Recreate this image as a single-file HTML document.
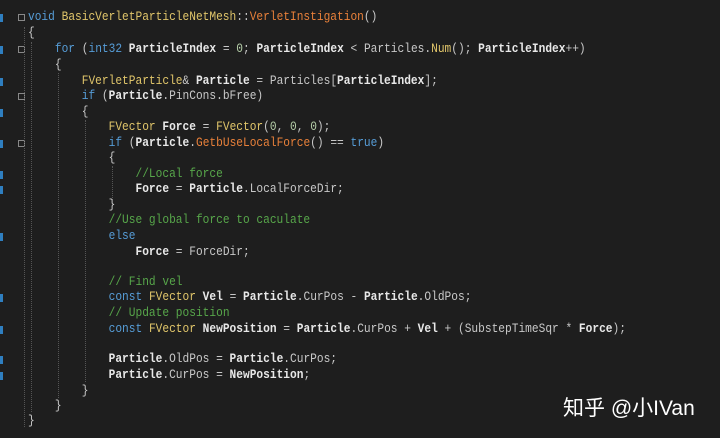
<!DOCTYPE html>
<html><head><meta charset="utf-8"><style>
body{margin:0;width:720px;height:438px;background:#1e1e1e;overflow:hidden;position:relative;font-family:"Liberation Mono",monospace;}
.l{position:absolute;left:28px;white-space:pre;font-size:12.45px;line-height:15.5px;color:#c8c8c8;transform:scaleX(0.9);transform-origin:0 0;}
.k{color:#569cd6}.t{color:#e0c56a}.f{color:#e8803a}.b{font-weight:bold;color:#e8e8e8}.c{color:#57a64a}.n{color:#b5cea8}
.dot{position:absolute;left:0;width:3px;height:8px;background:#2f7fc0;}
.box{position:absolute;left:18px;width:7px;height:7px;border:1px solid #888;box-sizing:border-box;}
.g{position:absolute;border-left:1px dotted #555;}
.wm{position:absolute;left:563px;top:392px;color:#fff;font-family:"Liberation Sans","Noto Sans CJK SC",sans-serif;font-size:21px;}
</style></head><body>
<div class="box" style="top:14px"></div><div class="box" style="top:46px"></div><div class="box" style="top:93px"></div><div class="box" style="top:140px"></div>
<div class="g" style="left:24px;top:27px;height:400px"></div>
<div class="g" style="left:31px;top:42px;height:370px"></div>
<div class="g" style="left:58px;top:73px;height:325px"></div>
<div class="g" style="left:85px;top:120px;height:262px"></div>
<div class="g" style="left:112px;top:166px;height:34px"></div>
<div class="l" style="top:10px"><span class="k">void</span> <span class="t">BasicVerletParticleNetMesh</span>::<span class="f">VerletInstigation</span>()</div>
<div class="l" style="top:26px">{</div>
<div class="l" style="top:42px">    <span class="k">for</span> (<span class="k">int32</span> <span class="b">ParticleIndex</span> = <span class="n">0</span>; <span class="b">ParticleIndex</span> &lt; Particles.<span class="t">Num</span>(); <span class="b">ParticleIndex</span>++)</div>
<div class="l" style="top:58px">    {</div>
<div class="l" style="top:74px">        <span class="t">FVerletParticle</span>&amp; <span class="b">Particle</span> = Particles[<span class="b">ParticleIndex</span>];</div>
<div class="l" style="top:89px">        <span class="k">if</span> (<span class="b">Particle</span>.PinCons.bFree)</div>
<div class="l" style="top:105px">        {</div>
<div class="l" style="top:120px">            <span class="t">FVector</span> <span class="b">Force</span> = <span class="t">FVector</span>(<span class="n">0</span>, <span class="n">0</span>, <span class="n">0</span>);</div>
<div class="l" style="top:136px">            <span class="k">if</span> (<span class="b">Particle</span>.<span class="f">GetbUseLocalForce</span>() == <span class="k">true</span>)</div>
<div class="l" style="top:151px">            {</div>
<div class="l" style="top:167px">                <span class="c">//Local force</span></div>
<div class="l" style="top:182px">                <span class="b">Force</span> = <span class="b">Particle</span>.LocalForceDir;</div>
<div class="l" style="top:198px">            }</div>
<div class="l" style="top:213px">            <span class="c">//Use global force to caculate</span></div>
<div class="l" style="top:229px">            <span class="k">else</span></div>
<div class="l" style="top:245px">                <span class="b">Force</span> = ForceDir;</div>
<div class="l" style="top:275px">            <span class="c">// Find vel</span></div>
<div class="l" style="top:290px">            <span class="k">const</span> <span class="t">FVector</span> <span class="b">Vel</span> = <span class="b">Particle</span>.CurPos - <span class="b">Particle</span>.OldPos;</div>
<div class="l" style="top:306px">            <span class="c">// Update position</span></div>
<div class="l" style="top:322px">            <span class="k">const</span> <span class="t">FVector</span> <span class="b">NewPosition</span> = <span class="b">Particle</span>.CurPos + <span class="b">Vel</span> + (SubstepTimeSqr * <span class="b">Force</span>);</div>
<div class="l" style="top:352px">            <span class="b">Particle</span>.OldPos = <span class="b">Particle</span>.CurPos;</div>
<div class="l" style="top:368px">            <span class="b">Particle</span>.CurPos = <span class="b">NewPosition</span>;</div>
<div class="l" style="top:384px">        }</div>
<div class="l" style="top:399px">    }</div>
<div class="l" style="top:414px">}</div>
<div class="dot" style="top:14px"></div><div class="dot" style="top:46px"></div><div class="dot" style="top:78px"></div><div class="dot" style="top:109px"></div><div class="dot" style="top:140px"></div><div class="dot" style="top:171px"></div><div class="dot" style="top:186px"></div><div class="dot" style="top:233px"></div><div class="dot" style="top:294px"></div><div class="dot" style="top:326px"></div><div class="dot" style="top:356px"></div><div class="dot" style="top:372px"></div>
<div class="wm">知乎 @小IVan</div>
</body></html>
